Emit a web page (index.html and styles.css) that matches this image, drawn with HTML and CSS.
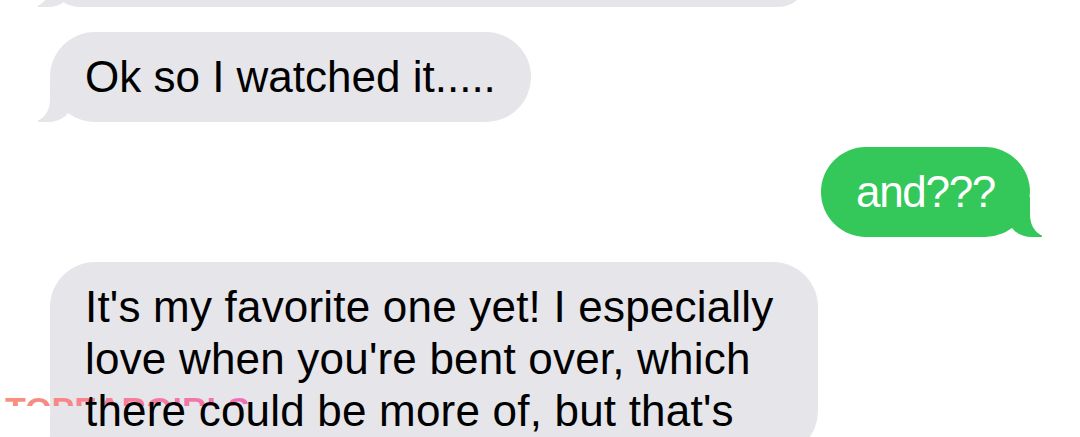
FILE: index.html
```html
<!DOCTYPE html>
<html lang="en">
<head>
    <meta charset="UTF-8">
    <meta name="viewport" content="width=device-width, initial-scale=1.0">
    <title>Messages</title>
    <link rel="stylesheet" href="styles.css">
</head>
<body>
    <div class="chat">
        <div class="msg in cut"></div>
        <div class="msg in"><span class="txt">Ok so I watched it.....</span></div>
        <div class="msg out"><span class="txt">and???</span></div>
        <div class="msg in wide"><span class="txt">It's my favorite one yet! I especially love when you're bent over, which there could be more of, but that's</span></div>
    </div>

    <div class="mark">TOPEARGIRLS</div>
</body>
</html>
```
FILE: styles.css
```css
body {
    margin: 0;
    background: #fff;
    font-family: "Liberation Sans", Arial, sans-serif;
    overflow: hidden;
}

.chat {
    display: flex;
    flex-direction: column;
    gap: 25px;
    padding: 0 50px;
}

.msg {
    position: relative;
    box-sizing: border-box;
    max-width: 768px;
    padding: 19px 35px;
    font-size: 44px;
    line-height: 52px;
    border-radius: 45px;
}

.txt {
    position: relative;
    z-index: 2;
}

/* incoming (grey, tail bottom left) */
.in {
    align-self: flex-start;
    background: #e5e5ea;
    color: #000;
}
.in::before {
    content: "";
    position: absolute;
    bottom: 0;
    left: -12px;
    width: 34px;
    height: 40px;
    background: #e5e5ea;
    border-bottom-right-radius: 24px 20px;
}
.in::after {
    content: "";
    position: absolute;
    bottom: 0;
    left: -42px;
    width: 42px;
    height: 40px;
    background: #fff;
    border-bottom-right-radius: 18px 22px;
}

/* outgoing (green, tail bottom right) */
.out {
    align-self: flex-end;
    background: #34c759;
    color: #fff;
    letter-spacing: -1.3px;
}
.out::before {
    content: "";
    position: absolute;
    bottom: 0;
    right: -12px;
    width: 34px;
    height: 40px;
    background: #34c759;
    border-bottom-left-radius: 24px 20px;
}
.out::after {
    content: "";
    position: absolute;
    bottom: 0;
    right: -42px;
    width: 42px;
    height: 40px;
    background: #fff;
    border-bottom-left-radius: 18px 22px;
}

.cut {
    width: 758px;
    height: 60px;
    margin-top: -53px;
}

.wide {
    width: 768px;
    letter-spacing: 0.2px;
}

/* watermark strip */
.mark {
    position: absolute;
    left: 5px;
    top: 392px;
    z-index: 1;
    height: 14px;
    overflow: hidden;
    font-size: 34px;
    font-weight: bold;
    line-height: 34px;
    background: linear-gradient(90deg, #f8907c, #f26db6);
    -webkit-background-clip: text;
    background-clip: text;
    color: transparent;
}
```
